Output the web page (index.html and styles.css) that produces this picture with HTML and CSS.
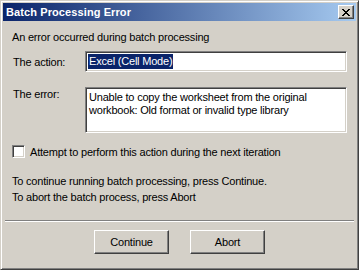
FILE: index.html
```html
<!DOCTYPE html>
<html lang="en">
<head>
    <meta charset="UTF-8">
    <title>Batch Processing Error</title>
    <link rel="stylesheet" href="styles.css">
</head>
<body>
    <div class="window">
        <div class="titlebar">
            <span class="title">Batch Processing Error</span>
            <span class="close-btn">
                <svg width="8" height="7" viewBox="0 0 8 7">
                    <path d="M0 0h2v1h-2zM6 0h2v1h-2zM1 1h2v1h-2zM5 1h2v1h-2zM2 2h4v1h-4zM3 3h2v1h-2zM2 4h4v1h-4zM1 5h2v1h-2zM5 5h2v1h-2zM0 6h2v1h-2zM6 6h2v1h-2z" fill="#000"/>
                </svg>
            </span>
        </div>
        <div class="content">
            <div class="intro">An error occurred during batch processing</div>
            <div class="field-row">
                <span class="field-label">The action:</span>
                <div class="field-box single"><span class="selected">Excel (Cell Mode)</span></div>
            </div>
            <div class="field-row top">
                <span class="field-label">The error:</span>
                <div class="field-box multi">Unable to copy the worksheet from the original<br>workbook: Old format or invalid type library</div>
            </div>
            <label class="check-row">
                <span class="checkbox"></span>
                Attempt to perform this action during the next iteration
            </label>
            <div class="hints">
                <div>To continue running batch processing, press Continue.</div>
                <div>To abort the batch process, press Abort</div>
            </div>
        </div>
        <div class="separator"></div>
        <div class="buttons">
            <button class="btn">Continue</button>
            <button class="btn">Abort</button>
        </div>
    </div>
</body>
</html>
```

FILE: styles.css
```css
body {
    margin: 0;
    font-family: "Liberation Sans", Arial, sans-serif;
    font-size: 11px;
    letter-spacing: -0.2px;
    color: #000;
    background: #d4d0c8;
}
.window {
    width: 359px;
    height: 270px;
    box-sizing: border-box;
    background: #d4d0c8;
    border: 1px solid;
    border-color: #d4d0c8 #404040 #404040 #d4d0c8;
    box-shadow: inset 1px 1px 0 #fff, inset -1px -1px 0 #808080;
    padding: 2px;
    display: flex;
    flex-direction: column;
}
.titlebar {
    height: 18px;
    display: flex;
    align-items: center;
    justify-content: space-between;
    padding: 0 2px 0 3px;
    background: linear-gradient(to right, #0a246a, #a6caf0);
}
.title {
    color: #fff;
    font-weight: bold;
    font-size: 11px;
    letter-spacing: 0.1px;
}
.close-btn {
    width: 16px;
    height: 14px;
    box-sizing: border-box;
    background: #d4d0c8;
    border: 1px solid;
    border-color: #fff #404040 #404040 #fff;
    box-shadow: inset -1px -1px 0 #808080;
    display: flex;
    align-items: center;
    justify-content: center;
}
.content {
    padding: 9px 9px 0 9px;
}
.intro {
    height: 14px;
    line-height: 14px;
}
.field-row {
    display: flex;
    align-items: center;
    margin-top: 7px;
}
.field-row.top {
    align-items: flex-start;
    margin-top: 15px;
}
.field-label {
    width: 72px;
    padding-left: 1px;
}
.field-row.top .field-label {
    padding-top: 1px;
}
.field-box {
    flex: 1;
    background: #fff;
    border: 1px solid;
    border-color: #808080 #fff #fff #808080;
    box-shadow: inset 1px 1px 0 #404040, inset -1px -1px 0 #d4d0c8;
    box-sizing: border-box;
}
.field-box.single {
    height: 21px;
    padding: 2px 2px;
}
.selected {
    display: inline-block;
    background: #0a246a;
    color: #fff;
    line-height: 15px;
    padding: 0 1px;
}
.field-box.multi {
    height: 46px;
    padding: 3px 3px;
    line-height: 13px;
}
.check-row {
    display: flex;
    align-items: center;
    gap: 5px;
    margin-top: 12px;
}
.checkbox {
    width: 13px;
    height: 13px;
    box-sizing: border-box;
    background: #fff;
    border: 1px solid;
    border-color: #808080 #fff #fff #808080;
    box-shadow: inset 1px 1px 0 #404040, inset -1px -1px 0 #d4d0c8;
}
.hints {
    margin-top: 15px;
    line-height: 16px;
}
.separator {
    margin: 15px 2px 0 2px;
    border-top: 1px solid #808080;
    border-bottom: 1px solid #fff;
}
.buttons {
    display: flex;
    justify-content: center;
    gap: 21px;
    margin-top: 8px;
}
.btn {
    width: 75px;
    height: 24px;
    font-family: "Liberation Sans", Arial, sans-serif;
    font-size: 11px;
    letter-spacing: -0.2px;
    color: #000;
    background: #d4d0c8;
    border: 1px solid;
    border-color: #fff #404040 #404040 #fff;
    box-shadow: inset -1px -1px 0 #808080;
    padding: 0;
}
```
